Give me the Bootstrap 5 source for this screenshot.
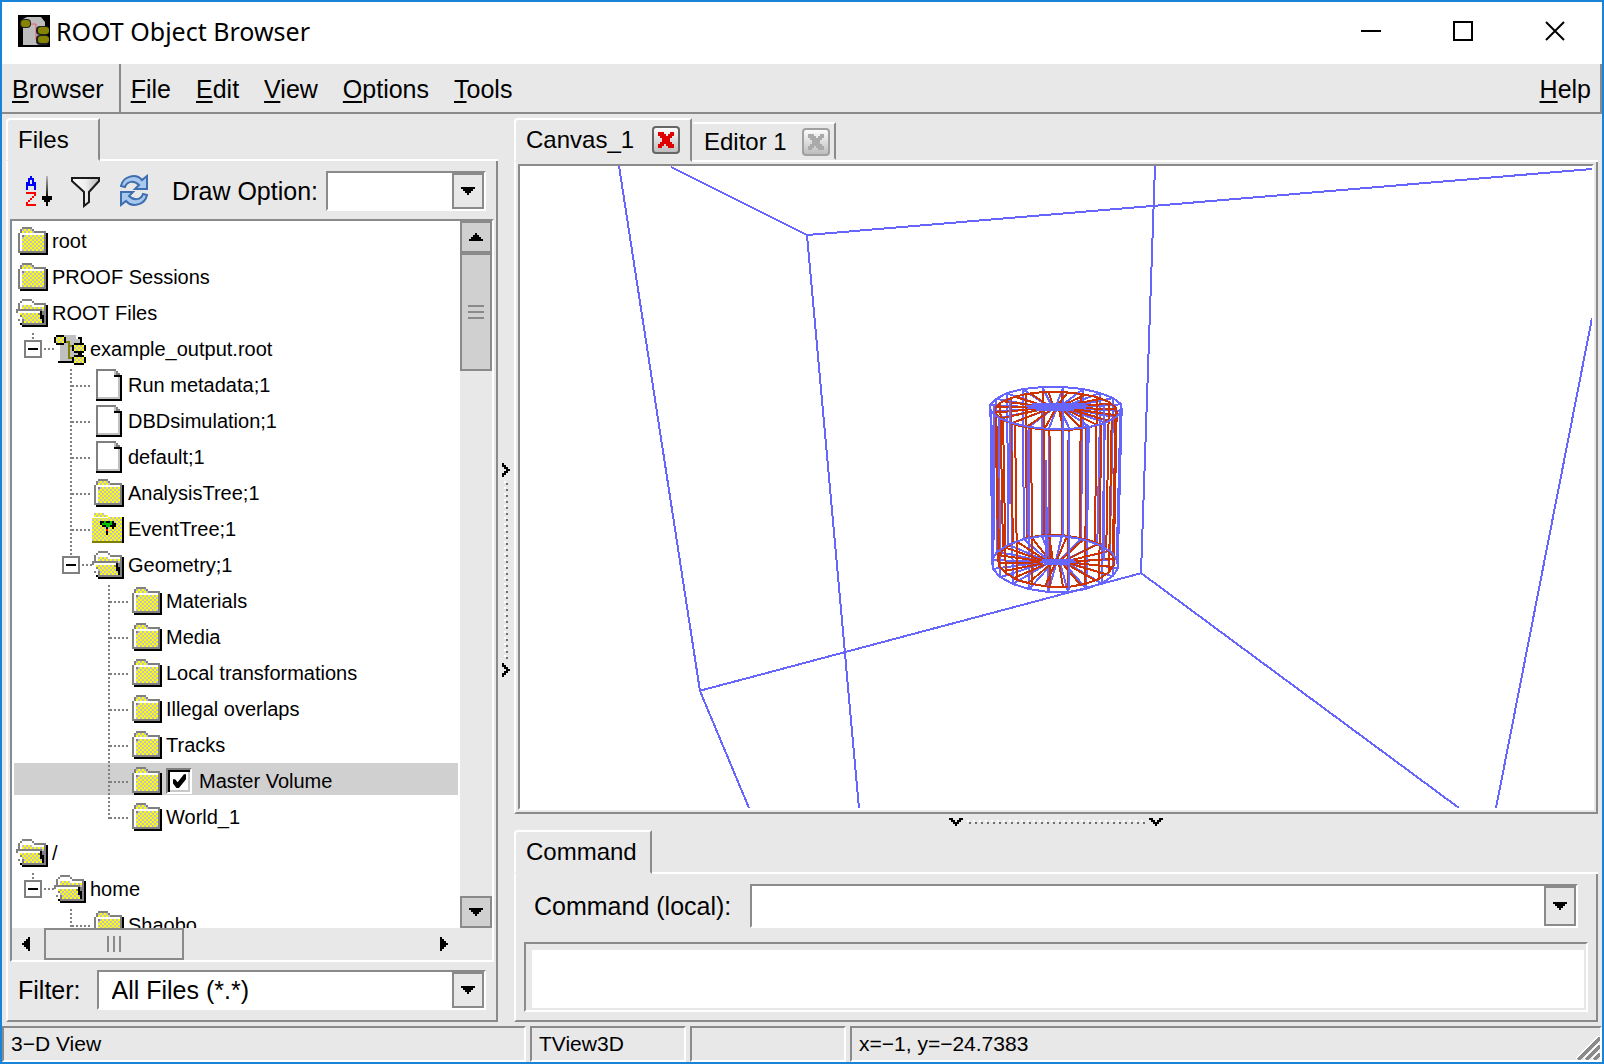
<!DOCTYPE html>
<html lang="en">
<head>
<meta charset="utf-8">
<meta name="viewport" content="width=device-width, initial-scale=1">
<title>ROOT Object Browser</title>
<link rel="stylesheet" href="https://cdn.jsdelivr.net/npm/bootstrap@5.3.0/dist/css/bootstrap.min.css">
<style>
:root { --face:#e8e8e8; --shade:#8a8a8a; --trough:#d0d0d0; --dots:#808080; }
body { height:100vh; min-height:640px; border:2px solid #1883d7; background:var(--face); color:#000;
  font:25px/28px "Liberation Sans", Arial, sans-serif; overflow:hidden; }
button, input, select, textarea { font:inherit; color:inherit; border:0; border-radius:0; margin:0; padding:0; background:none; }
svg { display:block; flex:none; }
.px { shape-rendering:crispEdges; }
.titlebar { height:62px; flex:none; background:#fff; padding:0 37px 4px 16px; }
.titlebar h1 { font:25px/32px "Noto Sans", sans-serif; margin:0; }
.titlebar h1 { padding-left:6px; }
.winbtns { gap:72px; }
.menubar { height:50px; flex:none; border-bottom:2px solid var(--shade); }
.menubar a { color:#000; text-decoration:none; padding-top:2px; }
.menubar u { text-decoration-thickness:2px; text-underline-offset:3px; }
.menu-first { border-right:2px solid var(--shade); padding:0 15px 0 10px; margin-right:10px; }
.menu-items { gap:25px; }
.menu-end { border-right:2px solid var(--shade); padding-right:9px; }
.workspace { padding:4px; }
.sidepane { width:492px; flex:none; }
.tabrow { height:44px; font-size:24px; }
.tabface { border:2px solid; border-color:#fff var(--shade) transparent #fff; border-top-left-radius:4px; }
.tabrest { border-bottom:2px solid #fff; }
.tabback { border:2px solid; border-color:#fff var(--shade) transparent transparent; height:38px; }
.raised { border:2px solid; border-color:transparent var(--shade) var(--shade) #fff; border-top:0; }
.sunk { border:2px solid; border-color:var(--shade) #fff #fff var(--shade); }
.treebox { margin:0 2px; }
.combo { height:40px; background:#fff; }
.combo input, .combo select { min-width:0; outline:0; appearance:none; padding-left:13px; }
.combo-tall { height:44px; }
.pushbox { width:32px; flex:none; background:var(--face); border:2px solid var(--shade); display:flex; align-items:center; justify-content:center; }
.tools { padding:10px 10px 8px 14px; }
.toolset { gap:17px; }
.tree { list-style:none; margin:0; padding:2px 0 0; font-size:20px; line-height:36px; white-space:nowrap; background:#fff; }
.tree li { display:flex; align-items:center; height:36px; margin:0 2px; }
.tree svg { margin-right:4px; }
.lv0 { padding-left:2px; } .lv1 { padding-left:10px; } .lv2 { padding-left:56px; } .lv2x { padding-left:48px; } .lv3 { padding-left:94px; }
.tee { width:22px; height:36px; flex:none;
  background:repeating-linear-gradient(#0000 0 2px,var(--dots) 2px 4px) 0 0/2px 100% no-repeat,
    repeating-linear-gradient(90deg,#0000 0 2px,var(--dots) 2px 4px) 0 18px/100% 2px no-repeat; }
.tee-last { background-size:2px 20px,100% 2px; }
.expander { width:18px; height:36px; flex:none; display:flex; align-items:center;
  background:repeating-linear-gradient(#0000 0 2px,var(--dots) 2px 4px) 8px 0/2px 8px no-repeat; }
.expander::after { content:""; width:18px; height:18px; border:2px solid var(--dots);
  background:linear-gradient(#000,#000) center/10px 2px no-repeat #fff; }
.stub { width:12px; height:2px; flex:none; background:repeating-linear-gradient(90deg,#0000 0 2px,var(--dots) 2px 4px); }
.picked { background:linear-gradient(var(--trough),var(--trough)) 0 0/100% 32px no-repeat; }
.tick { appearance:none; width:26px; height:26px; flex:none; border:2px solid; border-color:#808080 #fff #fff #808080;
  box-shadow:inset 2px 2px #000, inset -2px -2px #c8c8c8; background:#fff; margin-right:7px; position:relative; }
.tick:checked::after { content:""; position:absolute; left:5px; top:4px; width:13px; height:14px; background:#000;
  clip-path:polygon(0 35%,16% 35%,36% 58%,84% 0,100% 0,100% 35%,44% 100%,28% 100%,0 66%); }
.vbar { width:32px; flex:none; }
.vbar .pushbox, .vthumb { background:var(--trough); }
.vbar .pushbox { height:32px; }
.vthumb { height:118px; border:2px solid var(--shade); display:flex; align-items:center; justify-content:center; }
.hbar { height:32px; padding:0 44px 0 10px; }
.hthumb { width:140px; height:32px; border:2px solid var(--shade); margin-left:14px; }
.filterbar { padding:8px 10px 10px 10px; gap:16px; }
.vsplit { width:16px; flex:none; }
.hsplit { height:16px; flex:none; padding-top:4px; }
.cmdbar { padding:10px 18px 14px; gap:19px; }
.logbox { margin:0 8px 8px; padding:6px 2px 2px 6px; }
.logbox textarea { height:58px; background:#fff; resize:none; outline:0; }
.statusbar { height:36px; flex:none; font-size:21px; gap:4px; line-height:32px; }
.statusbar > div { padding-left:7px; }
.st-a { width:524px; } .st-b { width:156px; }
</style>
</head>
<body class="d-flex flex-column">

<svg width="0" height="0" class="position-absolute" aria-hidden="true">
  <defs>
    <pattern id="chk" width="4" height="4" patternUnits="userSpaceOnUse"><path fill="#c0c0c0" d="M0 0h4v4H0z"/><path fill="#ff0" d="M0 0h2v2H0zM2 2h2v2H2z"/></pattern>
    <linearGradient id="btnFace" x2="0" y2="1"><stop stop-color="#fff"/><stop offset="1" stop-color="#bbb"/></linearGradient>
    <linearGradient id="funnelFill"><stop stop-color="#fff"/><stop offset=".5" stop-color="#eee"/><stop offset="1" stop-color="#bbb"/></linearGradient>
    <linearGradient id="stemFade" x2="0" y2="1"><stop stop-color="#bbb"/><stop offset="1" stop-color="#000"/></linearGradient>
    <symbol id="folder" viewBox="0 0 32 32">
      <path d="M4 8h28v22H4z"/>
      <path fill="#808080" d="M2 8h2V4h2V2h10v2h2v2h12v22H2z"/>
      <path fill="#fff" d="M4 8h24v18h-2V10H6v16H4z"/>
      <path fill="url(#chk)" d="M6 4h10v2h2v2H6zM8 10h20v16H6V12h2z"/>
      <path fill="#fff" d="M4 8h24v2H4z"/>
    </symbol>
    <symbol id="folderopen" viewBox="0 0 32 32">
      <path d="M4 8h28v22H6v-2H4z"/>
      <path fill="#808080" d="M2 6h2V4h2V2h10v2h2v2h12v22H6v-4H2z"/>
      <path fill="#fff" d="M4 6h2V4h10v2h2v2h10v2H16V8H6v4H4z"/>
      <path fill="url(#chk)" d="M6 8h10v2h12v8H6z"/>
      <path fill="#808080" d="M0 12h26v2h2v12h-2v2H6v-4H4v-4H2v-4H0z"/>
      <path fill="#fff" d="M2 14h22v2H4v4h2v6H4v-4H2z"/>
      <path fill="url(#chk)" d="M4 16h18v2h2v4h2v4H8v-4H6v-4H4z"/>
      <path d="M24 14h2v4h2v8h-2v-4h-2z"/>
    </symbol>
    <symbol id="sheet" viewBox="0 0 32 32">
      <path d="M4 30h26V6h-4V4h-2v4H6v22z"/>
      <path fill="#808080" d="M4 0h20v2h2v2h2v2h-4V2H6v28H4z"/>
      <path fill="#c0c0c0" d="M6 2h18v4h4v24H6z"/>
      <path fill="#fff" d="M6 2h16v6h4v20H6z"/>
      <path d="M22 6h8v2h-8zM28 6h2v26h-2zM4 30h26v2H4z"/>
    </symbol>
    <symbol id="rootfile" viewBox="0 0 32 32">
      <path fill="#c0c0c0" d="M6 2h20v28H6z"/><path fill="#fff" d="M22 2h4v4h-4z"/>
      <path d="M24 4h4v6h-2V6h-2zM4 28h16v2H4z"/>
      <path fill="#808000" d="M10 8h6v16h4v2h-6V10h-4z"/><path fill="#808000" d="M16 12h4v2h-4z"/>
      <path d="M2 2h8v2h2v6h-2v2H2v-2H0V4h2zM20 10h10v2h2v6h-2v2h-2v2h2v2h2v6h-2v2H20v-2h-2v-6h2v-2h4v-2h-4v-2h-2v-6h2z"/>
      <path fill="url(#chk)" d="M2 4h8v6H2zM20 12h10v6H20zM20 24h10v6H20z"/>
    </symbol>
    <symbol id="treefolder" viewBox="0 0 32 32">
      <path fill="url(#chk)" d="M2 0h10v2h4v2h14v24H0V4h2z"/><path fill="#fff" d="M0 4h16v1H0z"/>
      <path d="M30 4h2v26h-2z"/><path fill="#808000" d="M0 28h30v2H0z"/>
      <path d="M10 8h12v2h2v4h-2v2h-2v-2h-4v8h-2v-8h-4v-2H8v-4h2z"/>
      <path fill="#00c000" d="M12 8h2v2h4V8h2v4h-2v2h-4v-2h-4v-2h2z"/><path fill="#f00" d="M14 16h2v2h-2z"/>
    </symbol>
    <symbol id="down" viewBox="0 0 14 8"><path d="M0 0h14v2h-2v2h-2v2H8v2H6V6H4V4H2V2H0z"/></symbol>
  </defs>
</svg>

<header class="titlebar d-flex align-items-center">
  <svg width="32" height="32" viewBox="0 0 32 32">
    <rect width="32" height="32"/><path fill="#bdbdbd" d="M5 4l4-2h14l4 5v20l-4 3H5z"/>
    <path fill="none" stroke="#f05868" stroke-width="1" d="M12 9h6v16h4M18 15h4"/>
    <rect x="2" y="4" width="11" height="9" rx="4" fill="#222"/><rect x="18" y="11" width="13" height="9" rx="4" fill="#222"/><rect x="18" y="20" width="13" height="10" rx="4" fill="#222"/>
    <rect x="3" y="5" width="9" height="7" rx="3" fill="#848400"/><rect x="20" y="12" width="11" height="7" rx="3" fill="#848400"/><rect x="20" y="21" width="11" height="7" rx="3" fill="#848400"/>
  </svg>
  <h1 class="flex-fill">ROOT Object Browser</h1>
  <div class="winbtns d-flex">
    <button type="button" aria-label="Minimize"><svg width="20" height="20" class="px"><path d="M0 9h20v2H0z"/></svg></button>
    <button type="button" aria-label="Maximize"><svg width="20" height="20" class="px"><path fill="none" stroke="#000" stroke-width="2" d="M1 1h18v18H1z"/></svg></button>
    <button type="button" aria-label="Close"><svg width="20" height="20"><path stroke="#000" stroke-width="2" d="M1 1l18 18M19 1L1 19"/></svg></button>
  </div>
</header>

<nav class="menubar d-flex align-items-stretch">
  <div class="menu-first d-flex align-items-center"><a href="#"><u>B</u>rowser</a></div>
  <div class="menu-items d-flex align-items-center flex-fill">
    <a href="#"><u>F</u>ile</a><a href="#"><u>E</u>dit</a><a href="#"><u>V</u>iew</a><a href="#"><u>O</u>ptions</a><a href="#"><u>T</u>ools</a>
  </div>
  <div class="menu-end d-flex align-items-center"><a href="#"><u>H</u>elp</a></div>
</nav>

<main class="workspace d-flex flex-fill" style="min-height:0">
  <aside class="sidepane d-flex flex-column">
    <div class="tabrow d-flex">
      <button type="button" class="tabface text-start" style="width:94px;padding-left:10px">Files</button>
      <div class="tabrest flex-fill"></div>
    </div>
    <div class="raised d-flex flex-column flex-fill" style="min-height:0">
      <div class="tools d-flex align-items-center">
        <div class="toolset d-flex">
        <button type="button" aria-label="Sort"><svg width="32" height="34" class="px" viewBox="0 0 32 34">
          <path fill="#00f" d="M8 2h2v2h2v4h2v8h-2v-4H6v4H4V8h2V4h2zM8 6v4h2V6z"/>
          <path fill="#f00" d="M4 18h10v4h-2v2h-2v2H8v2H6v2h8v2H4v-4h2v-2h2v-2h2v-2h2v-2H4z"/>
          <path fill="url(#stemFade)" d="M24 2h2v22h-2z"/><path d="M20 22h10v4h-2v2h-2v4h-2v-4h-2v-2h-2z"/></svg></button>
        <button type="button" aria-label="Filter tree"><svg width="30" height="34" viewBox="0 0 30 34">
          <path fill="url(#funnelFill)" stroke="#1a1a1a" stroke-width="2" d="M1 4h27v3L18 18v10l-5 4V18L1 7z"/></svg></button>
        <button type="button" aria-label="Refresh"><svg width="32" height="34" viewBox="0 0 32 34">
          <path fill="#a9c8ee" stroke="#3c6eb0" stroke-width="2" d="M3 12C5 2 18-1 24 6l5-4v13H17l4-4C16 6 9 7 7 13zM29 21c-2 10-15 13-21 6l-5 4V18h12l-4 4c5 5 12 4 14-2z"/></svg></button>
        </div>
        <label for="drawopt" class="ms-auto me-2">Draw Option:</label>
        <div class="combo sunk d-flex" style="width:160px">
          <input id="drawopt" type="text" class="flex-fill">
          <button type="button" class="pushbox" aria-label="Draw options"><svg width="14" height="8" class="px"><use href="#down"/></svg></button>
        </div>
      </div>
      <div class="treebox sunk d-flex flex-column flex-fill" style="min-height:0">
        <div class="d-flex flex-fill overflow-hidden">
          <ul class="tree flex-fill px">
            <li class="lv0"><svg width="32" height="32"><use href="#folder"/></svg>root</li>
            <li class="lv0"><svg width="32" height="32"><use href="#folder"/></svg>PROOF Sessions</li>
            <li class="lv0"><svg width="32" height="32"><use href="#folderopen"/></svg>ROOT Files</li>
            <li class="lv1"><span class="expander"></span><span class="stub"></span><svg width="32" height="32"><use href="#rootfile"/></svg>example_output.root</li>
            <li class="lv2"><span class="tee"></span><svg width="32" height="32"><use href="#sheet"/></svg>Run metadata;1</li>
            <li class="lv2"><span class="tee"></span><svg width="32" height="32"><use href="#sheet"/></svg>DBDsimulation;1</li>
            <li class="lv2"><span class="tee"></span><svg width="32" height="32"><use href="#sheet"/></svg>default;1</li>
            <li class="lv2"><span class="tee"></span><svg width="32" height="32"><use href="#folder"/></svg>AnalysisTree;1</li>
            <li class="lv2"><span class="tee"></span><svg width="32" height="32"><use href="#treefolder"/></svg>EventTree;1</li>
            <li class="lv2x"><span class="expander"></span><span class="stub"></span><svg width="32" height="32"><use href="#folderopen"/></svg>Geometry;1</li>
            <li class="lv3"><span class="tee"></span><svg width="32" height="32"><use href="#folder"/></svg>Materials</li>
            <li class="lv3"><span class="tee"></span><svg width="32" height="32"><use href="#folder"/></svg>Media</li>
            <li class="lv3"><span class="tee"></span><svg width="32" height="32"><use href="#folder"/></svg>Local transformations</li>
            <li class="lv3"><span class="tee"></span><svg width="32" height="32"><use href="#folder"/></svg>Illegal overlaps</li>
            <li class="lv3"><span class="tee"></span><svg width="32" height="32"><use href="#folder"/></svg>Tracks</li>
            <li class="lv3 picked"><span class="tee"></span><svg width="32" height="32"><use href="#folder"/></svg><input type="checkbox" class="tick" id="mv" checked><label for="mv">Master Volume</label></li>
            <li class="lv3"><span class="tee tee-last"></span><svg width="32" height="32"><use href="#folder"/></svg>World_1</li>
            <li class="lv0"><svg width="32" height="32"><use href="#folderopen"/></svg>/</li>
            <li class="lv1"><span class="expander"></span><span class="stub"></span><svg width="32" height="32"><use href="#folderopen"/></svg>home</li>
            <li class="lv2"><span class="tee tee-last"></span><svg width="32" height="32"><use href="#folder"/></svg>Shaobo</li>
          </ul>
          <div class="vbar d-flex flex-column">
            <button type="button" class="pushbox" aria-label="Scroll up"><svg width="14" height="8" class="px" viewBox="0 0 14 8"><path d="M6 0h2v2h2v2h2v2h2v2H0V6h2V4h2V2h2z"/></svg></button>
            <div class="vthumb"><svg width="16" height="14" class="px"><path fill="#8a8a8a" d="M0 0h16v2H0zM0 6h16v2H0zM0 12h16v2H0z"/></svg></div>
            <button type="button" class="pushbox mt-auto" aria-label="Scroll down"><svg width="14" height="8" class="px"><use href="#down"/></svg></button>
          </div>
        </div>
        <div class="hbar d-flex align-items-center">
          <button type="button" aria-label="Scroll left"><svg width="8" height="14" class="px"><path d="M8 0v14H6v-2H4v-2H2V8H0V6h2V4h2V2h2V0z"/></svg></button>
          <div class="hthumb d-flex align-items-center justify-content-center"><svg width="14" height="16" class="px"><path fill="#8a8a8a" d="M0 0h2v16H0zM6 0h2v16H6zM12 0h2v16h-2z"/></svg></div>
          <button type="button" class="ms-auto" aria-label="Scroll right"><svg width="8" height="14" class="px"><path d="M0 0v14h2v-2h2v-2h2V8h2V6H6V4H4V2H2V0z"/></svg></button>
        </div>
      </div>
      <div class="filterbar d-flex align-items-center">
        <label for="filetype">Filter:</label>
        <div class="combo sunk d-flex flex-fill">
          <select id="filetype" class="flex-fill"><option>All Files (*.*)</option></select>
          <button type="button" class="pushbox" aria-label="File types"><svg width="14" height="8" class="px"><use href="#down"/></svg></button>
        </div>
      </div>
    </div>
  </aside>

  <div class="vsplit d-flex align-items-center justify-content-center">
    <svg width="8" height="214" class="px" viewBox="0 0 8 214">
      <path id="chev" d="M0 0h2v2h2v2h2v2h2v2H6v2H4v2H2v2H0v-4h2V8h2V6H2V4H0z"/><use href="#chev" y="200"/>
      <path stroke="#fff" stroke-width="2" stroke-dasharray="2 4" d="M3 18v178"/><path stroke="#707070" stroke-width="2" stroke-dasharray="2 4" d="M5 20v176"/>
    </svg>
  </div>

  <section class="d-flex flex-column flex-fill" style="min-width:0">
    <div class="tabrow d-flex flex-shrink-0">
      <div class="tabface d-flex align-items-center justify-content-between" style="width:178px;padding:0 10px">
        <span>Canvas_1</span>
        <button type="button" aria-label="Close Canvas_1"><svg width="28" height="28" viewBox="0 0 28 28"><rect x="1" y="1" width="26" height="26" rx="3" fill="url(#btnFace)" stroke="#666" stroke-width="2"/><path fill="#e00000" class="px" d="M6 6h6v2h2v2h2V8h2V6h4v4h-2v2h-2v4h2v2h2v4h-6v-2h-2v-2h-2v2h-2v2H6v-4h2v-2h2v-4H8v-2H6z"/></svg></button>
      </div>
      <div class="tabrest flex-fill d-flex align-items-end">
        <div class="tabback d-flex align-items-center justify-content-between" style="width:144px;padding:2px 4px 0 10px">
          <span>Editor 1</span>
          <button type="button" aria-label="Close Editor 1"><svg width="28" height="28" viewBox="0 0 28 28"><rect x="1" y="1" width="26" height="26" rx="3" fill="url(#btnFace)" stroke="#a0a0a0" stroke-width="2"/><path fill="#aaa" class="px" d="M6 6h6v2h2v2h2V8h2V6h4v4h-2v2h-2v4h2v2h2v4h-6v-2h-2v-2h-2v2h-2v2H6v-4h2v-2h2v-4H8v-2H6z"/></svg></button>
        </div>
      </div>
    </div>
    <div class="raised d-flex flex-fill" style="min-height:0;padding:2px">
      <div class="sunk bg-white flex-fill overflow-hidden">
        <svg class="px" width="100%" height="100%" viewBox="520 166 1072 642">
          <g fill="none" stroke="#6666ff" stroke-width="2">
            <path d="M619 166L700 691L749 808M671 167L807 235L1592 169M807 235L859 808M1155 166L1141 573L1459 808M1592 318L1496 808M699 691L1142 573"/>
          </g>
          <g id="vessel" fill="none" stroke-width="2" transform="translate(970 370)"></g>
        </svg>
      </div>
    </div>

    <div class="hsplit d-flex justify-content-center">
      <svg width="214" height="8" class="px" viewBox="0 0 214 8">
        <path id="chevd" d="M0 0h4v2h2v2h2V2h2V0h4v2h-2v2h-2v2H8v2H6V6H4V4H2V2H0z"/><use href="#chevd" x="200"/>
        <path stroke="#fff" stroke-width="2" stroke-dasharray="2 4" d="M18 3h178"/><path stroke="#707070" stroke-width="2" stroke-dasharray="2 4" d="M20 5h176"/>
      </svg>
    </div>

    <div class="tabrow d-flex flex-shrink-0">
      <button type="button" class="tabface text-start" style="width:138px;padding-left:10px">Command</button>
      <div class="tabrest flex-fill"></div>
    </div>
    <div class="raised">
      <div class="cmdbar d-flex align-items-center">
        <label for="cmd">Command (local):</label>
        <div class="combo combo-tall sunk d-flex flex-fill">
          <input id="cmd" type="text" class="flex-fill">
          <button type="button" class="pushbox" aria-label="Command history"><svg width="14" height="8" class="px"><use href="#down"/></svg></button>
        </div>
      </div>
      <div class="logbox sunk"><textarea class="d-block w-100" aria-label="Output"></textarea></div>
    </div>
  </section>
</main>

<footer class="statusbar d-flex">
  <div class="sunk st-a">3−D View</div>
  <div class="sunk st-b">TView3D</div>
  <div class="sunk st-b"></div>
  <div class="sunk flex-fill d-flex">x=−1, y=−24.7383
    <svg width="24" height="24" class="ms-auto mt-auto px" viewBox="0 0 24 24"><path stroke="#fff" stroke-width="2" d="M0 23L23 0M8 23L23 8M16 23L23 16"/><path stroke="#8a8a8a" stroke-width="3" d="M2 24L24 2M10 24L24 10M18 24L24 18"/></svg>
  </div>
</footer>

<script src="https://cdn.jsdelivr.net/npm/bootstrap@5.3.0/dist/js/bootstrap.bundle.min.js"></script>
<script>
// Wireframe vessel: two coaxial 20-sided tubes with spoked end caps.
const vessel = document.getElementById('vessel');
const tubes = [
  { ink:'#6666ff', top:[87,38,66,21], bottom:[86,194,63,28], turn:0 },
  { ink:'#cc3300', top:[87,41,61,19], bottom:[87,191,58,26], turn:5 },
];
const rim = ([cx, cy, rx, ry], deg) => {
  const a = deg * Math.PI / 180;
  return [cx - 1 + 2 * Math.sin(a) + rx * Math.cos(a), cy + ry * Math.sin(a)];
};
const steps = Array.from({ length: 20 }, (_, k) => 80 + 18 * k);
const ring = (e) => 'M' + steps.map(a => rim(e, a).map(Math.round)).join('L') + 'Z';
function stroke(d, ink) {
  const p = document.createElementNS('http://www.w3.org/2000/svg', 'path');
  p.setAttribute('d', d); p.setAttribute('stroke', ink); vessel.append(p);
}
for (const t of tubes) {
  let d = ring(t.top) + ring(t.bottom);
  for (const s of steps) {
    d += `M${rim(t.top, s)}L${rim(t.bottom, s)}`;
    for (const [e, hub] of [[t.top, 38], [t.bottom, 192]]) {
      d += `M${rim(e, s + t.turn)}L${rim([87, hub, e[2] * .25, 3], s + t.turn)}`;
    }
  }
  stroke(d, t.ink);
}
// Outer rims, a few near staves and the dense hubs lie over the inner tube.
stroke(ring(tubes[0].top) + ring(tubes[0].bottom) +
  'M56 36h62M62 34h52M58 38h58M66 40h38M72 190h32M70 192h36M74 194h26M58 60V165M76 90V195M93 30V165M99 62V220M40 30V134M117 56V160M24 36V170M134 34V190', '#6666ff');
</script>
</body>
</html>
